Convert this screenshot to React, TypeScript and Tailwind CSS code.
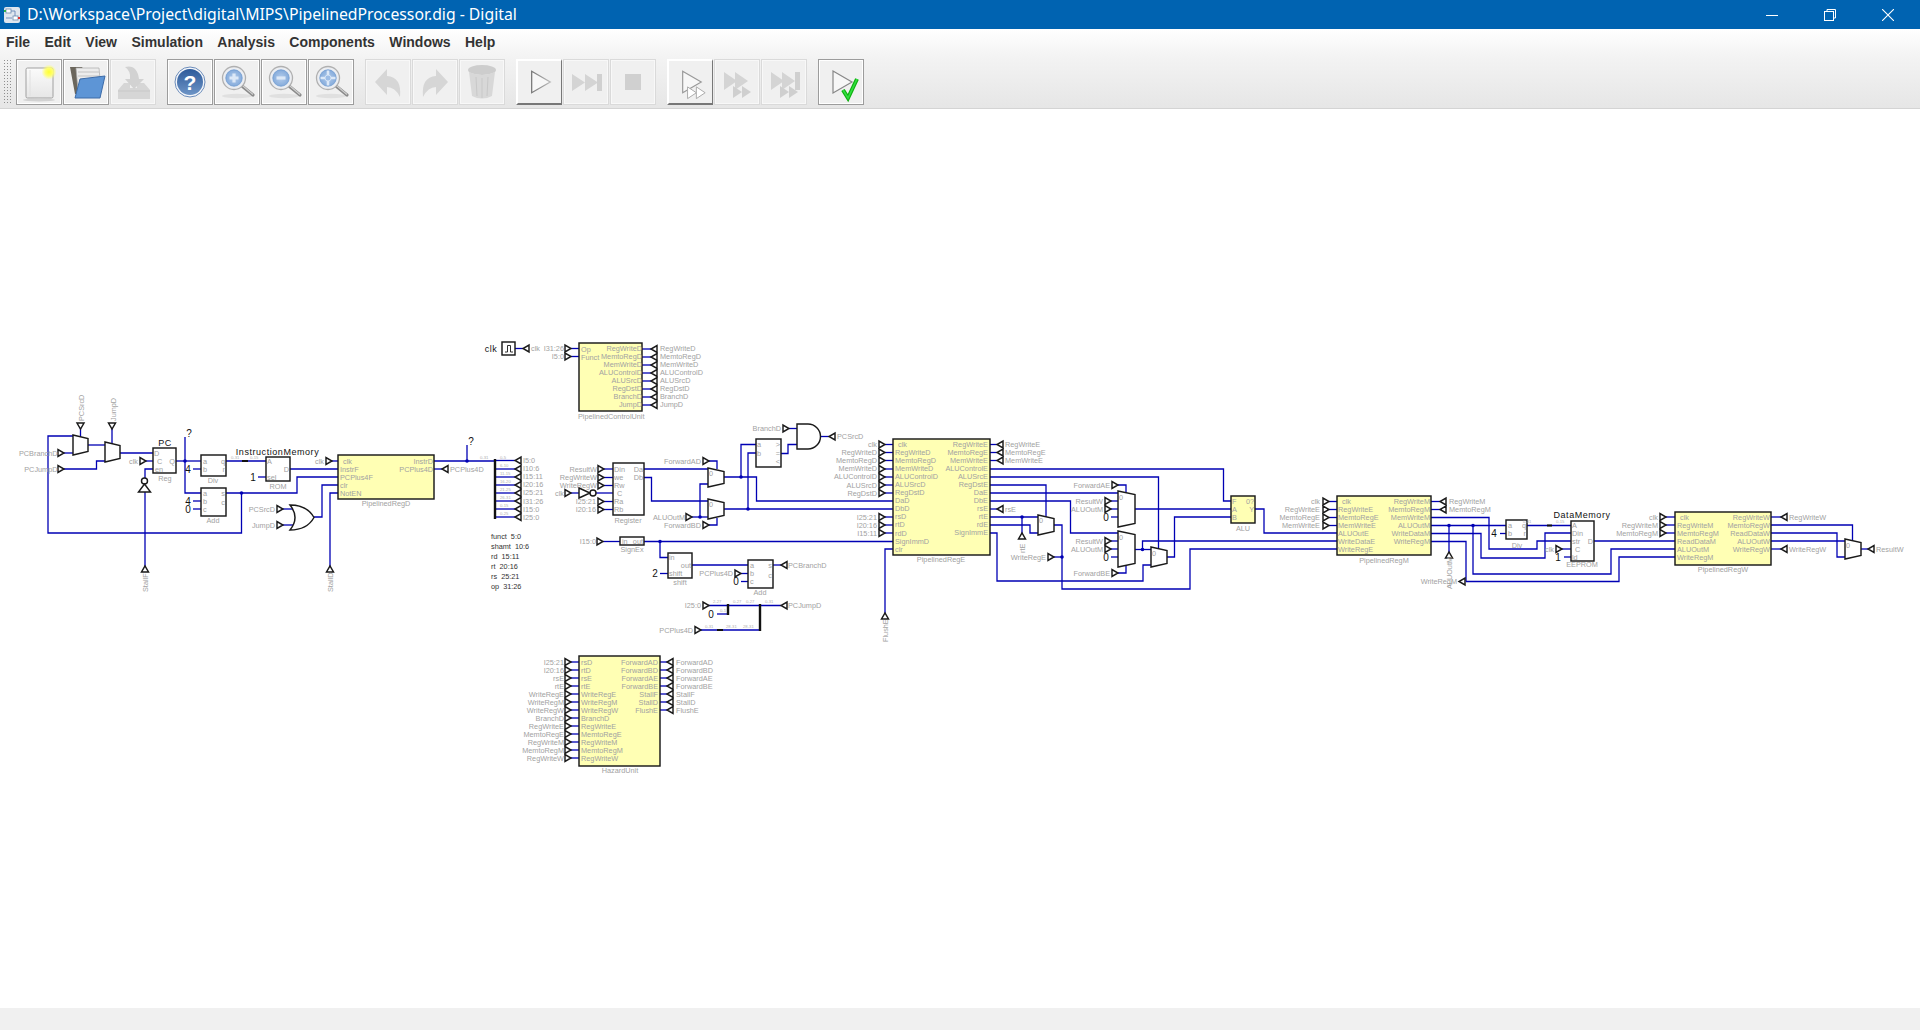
import React from "react";

type Txt = [number, number, string, ("start" | "end" | "middle")?];

const WIRES: string[] = [
  "80.5,428 80.5,438", "112,428 112,445", "73,436 48,436 48,533 241.5,533 241.5,493", "64,453 73,453",
  "64,469 96.5,469 96.5,461 105,461", "88,445 105,445", "120,453 153,453", "145,461 153,461",
  "153,469 145,469 145,478", "145,492 145,566", "176,461 201,461", "185,437 185,493 201,493",
  "193,469 201,469", "193,501 201,501", "193,509 201,509", "226,493 297,493 297,477 338,477",
  "226,461 266,461", "258,477 266,477", "290,469 338,469", "314,517 322,517 322,485 338,485",
  "282,509 294,509", "282,525 294,525", "330,566 330,493 338,493", "331,461 338,461",
  "434,461 495,461", "467,445 467,461", "434,469 442,469",
  "495,460.5 515,460.5", "495,469 515,469", "495,477 515,477", "495,485 515,485", "495,493 515,493", "495,501 515,501", "495,509 515,509", "495,517 515,517",
  "515,348.5 523,348.5", "571,348.5 579,348.5", "571,356.5 579,356.5",
  "604,469 613,469", "604,477.5 613,477.5", "604,485.5 613,485.5", "596,493 613,493", "570,493 579,493", "604,501.5 613,501.5", "604,509.5 613,509.5",
  "644,469 708,469", "644,477.5 651.5,477.5 651.5,501 708,501",
  "708,461 717,461 717,469", "708,525 717,525 717,518", "692,517 708,517", "700,517 700,484 708,484",
  "724,477 756.5,477 756.5,501 893,501", "724,509 893,509",
  "741,477 741,444.5 756,444.5", "748,509 748,453 756,453",
  "781,453.5 788,453.5 788,444.5 797,444.5", "789,428.5 797,428.5", "821,436.5 829,436.5",
  "603,541.5 620,541.5", "644,541.5 893,541.5", "660,541.5 660,557.5 668,557.5", "660,573.5 668,573.5",
  "692,565 748,565", "741,573.5 748,573.5", "741,581.5 748,581.5", "773,565 781,565",
  "708,605.5 781,605.5", "717,614 728,614", "700,630 760,630",
  "885,444.5 893,444.5", "885,452.5 893,452.5", "885,460.5 893,460.5", "885,469 893,469", "885,477 893,477", "885,485 893,485", "885,493 893,493",
  "885,517 893,517", "885,525 893,525", "885,533 893,533", "885,613 885,549 893,549",
  "990,444.5 997,444.5", "990,452.5 997,452.5", "990,460.5 997,460.5", "990,509 997,509",
  "990,469 1223.5,469 1223.5,501 1231,501", "990,477 1158.5,477 1158.5,550", "990,485 1046,485 1046,518",
  "990,493 1118,493", "990,501 1070.5,501 1070.5,533 1118,533", "990,517 1038,517", "1022,517 1022,533",
  "990,525 1030,525 1030,533 1038,533", "1054,525 1062,525 1062,589 1190,589 1190,549 1337,549",
  "1054,557 1062,557", "990,533 997,533 997,581 1143,581 1143,565 1151,565",
  "1118,485 1126,485 1126,493", "1111,501 1118,501", "1111,509 1118,509", "1111,517 1118,517",
  "1111,541 1118,541", "1111,549 1118,549", "1111,557 1118,557", "1118,573 1126,573 1126,565",
  "1135,509 1231,509", "1135,549.5 1151,549.5", "1142.5,549.5 1142.5,541 1337,541", "1167,557 1174.5,557 1174.5,517 1231,517",
  "1255,509 1264,509 1264,533 1337,533",
  "1329,501.5 1337,501.5", "1329,509.5 1337,509.5", "1329,517.5 1337,517.5", "1329,525.5 1337,525.5",
  "1431,501.5 1440,501.5", "1431,509.5 1440,509.5", "1431,517.5 1489,517.5 1489,549 1537,549 1537,541 1571,541",
  "1431,525.5 1506,525.5", "1449,525.5 1449,552", "1473,525.5 1473,574 1611,574 1611,549 1675,549",
  "1431,533.5 1481,533.5 1481,558 1545,558 1545,533 1571,533", "1431,541.5 1466,541.5 1466,581.5", "1466,581.5 1619,581.5 1619,557 1675,557",
  "1500,533.5 1506,533.5", "1527,525.5 1571,525.5", "1562,549 1571,549", "1564,557 1571,557", "1594,541 1675,541",
  "1666,517 1675,517", "1666,525 1675,525", "1666,533 1675,533",
  "1771,517 1781,517", "1771,525 1852.5,525 1852.5,541", "1771,533 1837,533 1837,557 1845,557", "1771,541 1845,541", "1771,549 1781,549", "1861,549 1868,549",
  ...[0,1,2,3,4,5,6,7].map((i) => `642,${349 + i * 8} 651,${349 + i * 8}`),
  ...[0,1,2,3,4,5,6,7,8,9,10,11,12].map((i) => `571,${662 + i * 8} 579,${662 + i * 8}`),
  ...[0,1,2,3,4,5,6].map((i) => `660,${662 + i * 8} 667,${662 + i * 8}`),
];

const DOTS = [[185,461],[241.5,493],[467,461],[700,517],[741,477],[748,509],[660,541.5],[1022,517],[1062,557],[1142.5,549.5],[1449,525.5],[1473,525.5]];

// x, y, direction
const PINS: [number, number, "r" | "l" | "u" | "d"][] = [
  [80.5,423,"d"],[112,423,"d"],[58,453,"r"],[58,469,"r"],[140,461,"r"],[145,566,"u"],[277,509,"r"],[277,525,"r"],[326,461,"r"],[330,566,"u"],[442,469,"l"],
  [515,460.5,"l"],[515,469,"l"],[515,477,"l"],[515,485,"l"],[515,493,"l"],[515,501,"l"],[515,509,"l"],[515,517,"l"],
  [523,348.5,"l"],[565,348.5,"r"],[565,356.5,"r"],
  [598,469,"r"],[598,477.5,"r"],[598,485.5,"r"],[565,493,"r"],[598,501.5,"r"],[598,509.5,"r"],
  [703,461,"r"],[703,525,"r"],[686,517,"r"],[783,428.5,"r"],[829,436.5,"l"],[597,541.5,"r"],[735,573.5,"r"],[781,565,"l"],[703,605.5,"r"],[781,605.5,"l"],[695,630,"r"],
  [885,613,"u"],[879,444.5,"r"],[879,452.5,"r"],[879,460.5,"r"],[879,469,"r"],[879,477,"r"],[879,485,"r"],[879,493,"r"],[879,517,"r"],[879,525,"r"],[879,533,"r"],
  [997,444.5,"l"],[997,452.5,"l"],[997,460.5,"l"],[997,509,"l"],[1022,533,"u"],[1048,557,"r"],
  [1112,485,"r"],[1105,501,"r"],[1105,509,"r"],[1105,541,"r"],[1105,549,"r"],[1112,573,"r"],
  [1323,501.5,"r"],[1323,509.5,"r"],[1323,517.5,"r"],[1323,525.5,"r"],[1440,501.5,"l"],[1440,509.5,"l"],[1449,552,"u"],[1459,581.5,"l"],
  [1556,549,"r"],[1660,517,"r"],[1660,525,"r"],[1660,533,"r"],[1781,517,"l"],[1781,549,"l"],[1868,549,"l"],
  ...[0,1,2,3,4,5,6,7].map((i) => [651, 349 + i * 8, "l"] as [number, number, "l"]),
  ...[0,1,2,3,4,5,6,7,8,9,10,11,12].map((i) => [565, 662 + i * 8, "r"] as [number, number, "r"]),
  ...[0,1,2,3,4,5,6].map((i) => [667, 662 + i * 8, "l"] as [number, number, "l"]),
];

// x, y, w, h, yellow?
const BOXES: [number, number, number, number, boolean?][] = [
  [153,448,23,25],[201,455,25,21],[201,488,25,28],[266,457,24,24],[338,455,96,44,true],
  [579,343,63,68,true],[613,463,31,52],[756,439,25,28],[620,537,24,8],[668,553,24,25],[748,560,25,28],
  [893,439,97,116,true],[1231,496,24,27,true],[1337,496,94,59,true],[1506,520,21,19],[1571,521,23,40],[1675,512,96,53,true],[579,656,81,110,true],
];

// x1, x2, y1, y2
const MUXES: [number, number, number, number][] = [
  [73,88,435,455],[105,120,442,462],[708,724,468,487],[708,724,499,519],[1038,1054,515,535],
  [1118,1135,491,527],[1118,1135,531,567],[1151,1167,547,567],[1845,1861,539,559],
];

const rows = (x: number, y: number, step: number, names: string[], a: "start" | "end" = "start"): Txt[] =>
  names.map((n, i) => [x, y + i * step, n, a] as Txt);

const GRAY: Txt[] = [
  [57.5,453,"PCBranchD","end"],[57.5,469,"PCJumpD","end"],[138,461,"clk","end"],[154,453,"D"],[157,461,"C"],[155,469,"en"],[175,461,"Q","end"],[165,478,"Reg","middle"],
  [203,461,"a"],[225,461,"q","end"],[203,469,"b"],[225,469,"r","end"],[213,480,"Div","middle"],
  [203,493,"a"],[225,493,"s","end"],[203,501,"b"],[225,502,"c","end"],[203,509,"c"],[213,520,"Add","middle"],
  [267,461,"A"],[289,469,"D","end"],[267,477,"sel"],[278,486,"ROM","middle"],[275,509,"PCSrcD","end"],[275,525,"JumpD","end"],[324,461,"clk","end"],
  [343,461,"clk"],...rows(340,469,8,["InstrF","PCPlus4F","clr","NotEN"]),[433,461,"InstrD","end"],[433,469,"PCPlus4D","end"],[386,503,"PipelinedRegD","middle"],
  [450,469,"PCPlus4D"],
  ...rows(523,460.5,8.1,["I5:0","I10:6","I15:11","I20:16","I25:21","I31:26","I15:0","I25:0"]),
  [531,348.5,"clk"],[564,348.5,"I31:26","end"],[564,356.5,"I5:0","end"],[581,349,"Op"],[581,357,"Funct"],
  ...rows(642,348.4,8,["RegWriteD","MemtoRegD","MemWriteD","ALUControlD","ALUSrcD","RegDstD","BranchD","JumpD"],"end"),
  ...rows(660,348.4,8,["RegWriteD","MemtoRegD","MemWriteD","ALUControlD","ALUSrcD","RegDstD","BranchD","JumpD"]),
  [578,416,"PipelinedControlUnit"],
  ...rows(597,469,8.2,["ResultW","RegWriteW","WriteRegW"],"end"),[564,493,"clk","end"],[596,501.5,"I25:21","end"],[596,509.5,"I20:16","end"],
  ...rows(614,469,8.2,["Din","we","Rw"]),[617,493.5,"C"],[614,501.5,"Ra"],[614,509.5,"Rb"],[643,469,"Da","end"],[643,477.5,"Db","end"],[628,520.5,"Register","middle"],
  [701,461,"ForwardAD","end"],[701,525,"ForwardBD","end"],[685,517,"ALUOutM","end"],[709,473,"0"],[709,504,"0"],
  [757,444.5,"a"],[757,453,"b"],[780,444,">","end"],[780,453,"=","end"],[780,461,"<","end"],
  [781,428.5,"BranchD","end"],[837,436.5,"PCSrcD"],[596,541.5,"I15:0","end"],[622,541.5,"in"],[643,541.5,"out","end"],[632,549.5,"SignEx","middle"],
  [669,557.5,"in"],[691,565,"out","end"],[669,573.5,"shift"],[680,582.5,"shift","middle"],
  [750,565,"a"],[772,565,"s","end"],[750,573.5,"b"],[772,575,"c","end"],[750,581.5,"c"],[760,592,"Add","middle"],[733,573.5,"PCPlus4D","end"],[788,565,"PCBranchD"],
  [701,605.5,"I25:0","end"],[788,605.5,"PCJumpD"],[693,630,"PCPlus4D","end"],
  ...rows(877,444.5,8.1,["clk","RegWriteD","MemtoRegD","MemWriteD","ALUControlD","ALUSrcD","RegDstD"],"end"),
  ...rows(877,517,8,["I25:21","I20:16","I15:11"],"end"),
  [898,444.5,"clk"],...rows(895,452.5,8.05,["RegWriteD","MemtoRegD","MemWriteD","ALUControlD","ALUSrcD","RegDstD","DaD","DbD","rsD","rtD","rdD","SignImmD","clr"]),
  ...rows(988,444.5,8,["RegWriteE","MemtoRegE","MemWriteE","ALUControlE","ALUSrcE","RegDstE","DaE","DbE","rsE","rtE","rdE","SignImmE"],"end"),
  [941,559,"PipelinedRegE","middle"],[1005,444.5,"RegWriteE"],[1005,452.5,"MemtoRegE"],[1005,460.5,"MemWriteE"],[1005,509,"rsE"],
  [1039,520,"0"],[1046,557,"WriteRegE","end"],[1110,485,"ForwardAE","end"],[1103,501,"ResultW","end"],[1103,509,"ALUOutM","end"],[1119,497,"0"],
  [1103,541,"ResultW","end"],[1103,549,"ALUOutM","end"],[1119,537,"0"],[1110,573,"ForwardBE","end"],[1152,553,"0"],
  [1232,501,"F"],[1232,509,"A"],[1232,517,"B"],[1254,501,"0?","end"],[1254,509,"Y","end"],[1243,528,"ALU","middle"],
  [1320,501.5,"clk","end"],...rows(1320,509.5,8,["RegWriteE","MemtoRegE","MemWriteE"],"end"),
  [1342,501.5,"clk"],...rows(1338,509.5,8,["RegWriteE","MemtoRegE","MemWriteE","ALUOutE","WriteDataE","WriteRegE"]),
  ...rows(1430,501.5,8,["RegWriteM","MemtoRegM","MemWriteM","ALUOutM","WriteDataM","WriteRegM"],"end"),[1449,501.5,"RegWriteM"],[1449,509.5,"MemtoRegM"],[1384,560,"PipelinedRegM","middle"],
  [1457,581.5,"WriteRegM","end"],
  [1508,525.5,"a"],[1526,525.5,"q","end"],[1508,533.5,"b"],[1526,533.5,"r","end"],[1517,545,"Div","middle"],
  [1572,525.5,"A"],[1572,533.5,"Din"],[1572,541,"str"],[1575,549,"C"],[1572,557,"ld"],[1593,541,"D","end"],[1582,564.5,"EEPROM","middle"],[1554,549,"clk","end"],
  [1658,517,"clk","end"],[1658,525,"RegWriteM","end"],[1658,533,"MemtoRegM","end"],[1680,517,"clk"],
  ...rows(1677,525,8,["RegWriteM","MemtoRegM","ReadDataM","ALUOutM","WriteRegM"]),
  ...rows(1770,517,8,["RegWriteW","MemtoRegW","ReadDataW","ALUOutW","WriteRegW"],"end"),[1723,569,"PipelinedRegW","middle"],[1789,517,"RegWriteW"],[1789,549,"WriteRegW"],[1846,545,"0"],[1876,549,"ResultW"],
  ...rows(564,662,8,["I25:21","I20:16","rsE","rtE","WriteRegE","WriteRegM","WriteRegW","BranchD","RegWriteE","MemtoRegE","RegWriteM","MemtoRegM","RegWriteW"],"end"),
  ...rows(581,662,8,["rsD","rtD","rsE","rtE","WriteRegE","WriteRegM","WriteRegW","BranchD","RegWriteE","MemtoRegE","RegWriteM","MemtoRegM","RegWriteW"]),
  ...rows(658,662,8,["ForwardAD","ForwardBD","ForwardAE","ForwardBE","StallF","StallD","FlushE"],"end"),
  ...rows(676,662,8,["ForwardAD","ForwardBD","ForwardAE","ForwardBE","StallF","StallD","FlushE"]),
  [620,770,"HazardUnit","middle"],
];

const TINY: Txt[] = [
  [231,458.5,"0-31"],[250,458.5,"0-15"],[480,458.5,"0-31"],[500,458.5,"0-5"],[500,466.5,"6-10"],[500,474.5,"11-15"],[500,482.5,"16-20"],[500,490.5,"21-25"],[500,498.5,"26-31"],[500,506.5,"0-15"],[500,514.5,"0-25"],
  [713,603,"2-27"],[733,603,"0-27"],[746,603,"0-27"],[765,603,"0-31"],[720,611.5,"0-1"],[705,627.5,"0-31"],[726,627.5,"28-31"],[743,627.5,"28-31"],[1523,523,"0-31"],[1556,523,"0-15"],
];

const BLACK: Txt[] = [
  [165,443,"PC","middle"],[277.5,451.5,"InstructionMemory","middle"],[1582,514.5,"DataMemory","middle"],[491,349,"clk","middle"],
];
const NUMS: Txt[] = [
  [188,469.5,"4","middle"],[188,501.5,"4","middle"],[188,509.5,"0","middle"],[253,477.5,"1","middle"],[655,573.5,"2","middle"],[736,581.5,"0","middle"],[711,614,"0","middle"],
  [1106,517,"0","middle"],[1106,557,"0","middle"],[1494,533.5,"4","middle"],[1558,557,"1","middle"],
];
const QS: Txt[] = [[189,437,"?","middle"],[471,445,"?","middle"]];
const NOTES = ["funct  5:0", "shamt  10:6", "rd  15:11", "rt  20:16", "rs  25:21", "op  31:26"];
const VERT: Txt[] = [[84,421,"PCSrcD"],[116,421,"JumpD"],[147.5,592,"StallF"],[332.5,592,"StallD"],[888,642,"FlushE"],[1025,553,"rtE"],[1451.5,589,"ALUOutM"]];

const pinPoints = (x: number, y: number, d: string) => {
  if (d === "r") return `${x},${y - 3.5} ${x},${y + 3.5} ${x + 6},${y}`;
  if (d === "l") return `${x + 6},${y - 3.5} ${x + 6},${y + 3.5} ${x},${y}`;
  if (d === "u") return `${x - 3.5},${y + 6} ${x + 3.5},${y + 6} ${x},${y}`;
  return `${x - 3.5},${y} ${x + 3.5},${y} ${x},${y + 6}`;
};

function Circuit() {
  return (
    <svg width="1920" height="899" viewBox="0 109 1920 899" className="block font-['Liberation_Sans',sans-serif]">
      <g fill="none" stroke="#0000b4" strokeWidth="1.3">
        {WIRES.map((w, i) => <polyline key={i} points={w} />)}
      </g>
      <g fill="#0000b4">
        {DOTS.map(([x, y], i) => <circle key={i} cx={x} cy={y} r="1.8" />)}
      </g>
      <g stroke="#1a1a1a" strokeWidth="1.45" fill="#fff">
        {BOXES.map(([x, y, w, h, yel], i) => <rect key={i} x={x} y={y} width={w} height={h} fill={yel ? "#ffffb4" : "#fff"} />)}
        {MUXES.map(([a, b, c, d], i) => <polygon key={i} points={`${a},${c} ${b},${c + 3.5} ${b},${d - 3.5} ${a},${d}`} />)}
        <path d="M290,505 Q300,517.5 290,530 Q307,530 314,517.5 Q307,505 290,505Z" />
        <path d="M797,424 H808 A12.5,12.5 0 0 1 808,449 H797Z" />
        <polygon points="579,488 579,498 590,493" />
        <circle cx="593" cy="493" r="3" />
        <circle cx="144.5" cy="481" r="3" />
        <polygon points="138.5,492 150.5,492 144.5,484" />
        <rect x="502" y="342" width="13" height="13" />
        <path d="M505,352 H507.5 V345.5 H510.5 V352 H513" fill="none" strokeWidth="0.9" />
        {PINS.map(([x, y, d], i) => <polygon key={i} points={pinPoints(x, y, d)} />)}
      </g>
      <g stroke="#111" fill="none">
        <line x1="495" y1="459" x2="495" y2="519" strokeWidth="2.4" />
        <line x1="728" y1="604" x2="728" y2="615" strokeWidth="2.4" />
        <line x1="760" y1="604" x2="760" y2="631" strokeWidth="2.4" />
        <line x1="242" y1="461" x2="248" y2="461" strokeWidth="2" />
        <line x1="717" y1="630" x2="723" y2="630" strokeWidth="2" />
        <line x1="1547" y1="525.5" x2="1552" y2="525.5" strokeWidth="2" />
      </g>
      <g fontSize="7.3" fill="#a2a2a2">
        {GRAY.map(([x, y, t, a], i) => <text key={i} x={x} y={y + 2.5} textAnchor={a ?? "start"}>{t}</text>)}
        {VERT.map(([x, y, t], i) => <text key={i} x={x} y={y} transform={`rotate(-90 ${x} ${y})`}>{t}</text>)}
      </g>
      <g fontSize="4.2" fill="#b0b0b0">
        {TINY.map(([x, y, t], i) => <text key={i} x={x} y={y}>{t}</text>)}
      </g>
      <g fontSize="9" fill="#111" letterSpacing="0.55">
        {BLACK.map(([x, y, t, a], i) => <text key={i} x={x} y={y + 3} textAnchor={a}>{t}</text>)}
      </g>
      <g fontSize="10" fill="#111">
        {NUMS.map(([x, y, t, a], i) => <text key={i} x={x} y={y + 3.6} textAnchor={a}>{t}</text>)}
        {QS.map(([x, y, t, a], i) => <text key={i} x={x} y={y} textAnchor={a}>{t}</text>)}
      </g>
      <g fontSize="7.3" fill="#333">
        {NOTES.map((t, i) => <text key={i} x="491" y={538.5 + i * 10} xmlSpace="preserve">{t}</text>)}
      </g>
    </svg>
  );
}

const I = ({ children }: { children: React.ReactNode }) => (
  <svg width="44" height="44" viewBox="0 0 44 44">{children}</svg>
);

const NewIcon = () => (
  <I>
    <defs>
      <linearGradient id="pg" x1="0" y1="0" x2="0" y2="1"><stop offset="0" stopColor="#fbfbfb" /><stop offset="1" stopColor="#e6e6e6" /></linearGradient>
      <radialGradient id="gl"><stop offset="0" stopColor="#ffff30" /><stop offset="0.5" stopColor="#ffff70" /><stop offset="1" stopColor="#ffff70" stopOpacity="0" /></radialGradient>
    </defs>
    <rect x="9" y="8" width="27" height="30" rx="1.5" fill="url(#pg)" stroke="#a0a0a0" />
    <line x1="13" y1="10" x2="13" y2="36" stroke="#e0e0e0" />
    <ellipse cx="22" cy="40" rx="16" ry="1.4" fill="#d2d2d2" />
    <circle cx="32" cy="12" r="7.5" fill="url(#gl)" />
  </I>
);
const OpenIcon = () => (
  <I>
    <path d="M6,7 H18 L20,10 H24 V34 H11Z" fill="#6b665c" />
    <path d="M12,8 H35 L37,30 H14Z" fill="#ececec" stroke="#ababab" strokeWidth="0.7" />
    <path d="M14,12 H35 M14,16 H36" stroke="#c2c2c2" />
    <path d="M16,19 L41,16 L36,38 H11Z" fill="#5d95d6" stroke="#3c6ba8" />
  </I>
);
const SaveIcon = () => (
  <I>
    <path d="M7,30 L13,23 H19 V28 H26 V23 H33 L39,30 V39 H7Z" fill="#d6d6d6" />
    <path d="M7,31 H39" stroke="#c8c8c8" />
    <path d="M14,7 Q26,4 28,19 H33 L23,29 L14,19 H19 Q20,11 14,7Z" fill="#d2d2d2" />
  </I>
);
const HelpIcon = () => (
  <I>
    <defs>
      <linearGradient id="hb" x1="0" y1="0" x2="0" y2="1"><stop offset="0" stopColor="#2d5a9a" /><stop offset="1" stopColor="#6d94c6" /></linearGradient>
    </defs>
    <circle cx="22" cy="22" r="15" fill="#f4f6fa" stroke="#6b8cba" />
    <circle cx="22" cy="22" r="13" fill="url(#hb)" />
    <text x="22" y="29.5" textAnchor="middle" fontSize="21" fontWeight="700" fill="#fff" fontFamily="Liberation Sans">?</text>
  </I>
);
const Mag = ({ mode, id }: { mode: "plus" | "minus" | "fit"; id: string }) => (
  <I>
    <defs>
      <radialGradient id={id}><stop offset="0" stopColor="#b4cdec" /><stop offset="1" stopColor="#85abdb" /></radialGradient>
    </defs>
    <ellipse cx="22" cy="36" rx="15" ry="2.2" fill="#e0e0e0" />
    <line x1="27" y1="26" x2="38" y2="35" stroke="#8a8a8a" strokeWidth="3.2" strokeLinecap="round" />
    <line x1="28" y1="26" x2="38" y2="34.5" stroke="#d0d0d0" strokeWidth="1.1" />
    <circle cx="19" cy="18" r="11.5" fill="#eceef2" stroke="#b0b0b0" strokeWidth="1.3" />
    <circle cx="19" cy="18" r="8.2" fill={`url(#${id})`} stroke="#6f9ad0" strokeWidth="0.8" />
    {mode === "plus" && <path d="M19,13.5 V22.5 M14.5,18 H23.5" stroke="#dce8f7" strokeWidth="3.2" />}
    {mode === "minus" && <path d="M14.5,18 H23.5" stroke="#dce8f7" strokeWidth="3.2" />}
    {mode === "fit" && <path d="M19,10.5 V25.5 M11.5,18 H26.5" stroke="#dce8f7" strokeWidth="2.6" />}
    {mode === "fit" && <circle cx="19" cy="18" r="3" fill="#9dbde6" stroke="#dce8f7" strokeWidth="0.8" />}
  </I>
);
const UndoIcon = ({ flip }: { flip?: boolean }) => (
  <I>
    <path
      d="M9,22 L21,9 V16 Q36,17 34,37 Q29,27 21,27 V35Z"
      fill="#d6d6d6"
      transform={flip ? "translate(44,0) scale(-1,1)" : undefined}
    />
  </I>
);
const TrashIcon = () => (
  <I>
    <ellipse cx="22" cy="10" rx="14" ry="5" fill="#cdcdcd" />
    <path d="M9,12 Q22,18 35,12 L32,36 Q22,41 12,36Z" fill="#d8d8d8" />
    <path d="M16,17 L17,36 M22,18 V38 M28,17 L27,36" stroke="#c8c8c8" />
  </I>
);
const PlayIcon = () => (
  <I>
    <defs><linearGradient id="pl" x1="0" y1="0" x2="1" y2="0"><stop offset="0" stopColor="#777" /><stop offset="1" stopColor="#bbb" /></linearGradient></defs>
    <polygon points="14,11 33,22 14,33" fill="#f7f7f7" stroke="url(#pl)" strokeWidth="1.3" />
  </I>
);
const FFIcon = () => (
  <I>
    <polygon points="8,14 21,22.5 8,31" fill="#d4d4d4" />
    <polygon points="21,14 34,22.5 21,31" fill="#d4d4d4" />
    <rect x="33" y="14" width="5" height="17" fill="#d0d0d0" />
  </I>
);
const StopIcon = () => (
  <I><rect x="14" y="14" width="16" height="16" fill="#d0d0d0" /></I>
);
const MicroIcon = () => (
  <I>
    <polygon points="14,11 33,22 14,33" fill="#f7f7f7" stroke="#999" strokeWidth="1.2" />
    <polygon points="19,27 28,33 19,39" fill="#fff" stroke="#aaa" />
    <polygon points="28,27 37,33 28,39" fill="#fff" stroke="#aaa" />
  </I>
);
const FFMicro = ({ bar }: { bar?: boolean }) => (
  <I>
    <polygon points="9,12 22,21 9,30" fill="#d4d4d4" />
    <polygon points="20,12 33,21 20,30" fill="#d4d4d4" />
    {bar && <rect x="33" y="12" width="5" height="18" fill="#d0d0d0" />}
    <polygon points="18,26 27,32 18,38" fill="#cfcfcf" />
    <polygon points="27,26 36,32 27,38" fill="#cfcfcf" />
  </I>
);
const CheckIcon = () => (
  <I>
    <polygon points="14,11 33,22 14,33" fill="#f7f7f7" stroke="#888" strokeWidth="1.2" />
    <path d="M24,30 L29,38 L38,19" fill="none" stroke="#10b010" strokeWidth="4" strokeLinejoin="miter" />
    <path d="M24,30 L29,38 L38,19" fill="none" stroke="#30e040" strokeWidth="1.6" />
  </I>
);

const Btn = ({ v = "on", children }: { v?: "on" | "off" | "raised"; children: React.ReactNode }) => {
  const c =
    v === "on"
      ? "border border-[#9c9c9c] shadow-[inset_0_0_0_1px_#fff]"
      : v === "off"
        ? "border border-[#dadada] shadow-[inset_0_0_0_1px_#f8f8f8]"
        : "border-t-2 border-l-2 border-r border-b-2 border-t-white border-l-white border-r-[#777] border-b-[#777]";
  return (
    <div className={`w-[46px] h-[46px] flex items-center justify-center bg-[#f0f0f0] ${c}`}>{children}</div>
  );
};

const Menu = ["File", "Edit", "View", "Simulation", "Analysis", "Components", "Windows", "Help"];

export default function App() {
  return (
    <div className="w-[1920px] h-[1030px] flex flex-col bg-white overflow-hidden font-['Liberation_Sans',sans-serif]">
      <div className="h-[29px] bg-[#0063b1] flex items-center text-white shrink-0">
        <svg width="16" height="16" viewBox="0 0 16 16" className="ml-[4px] mr-[7px]">
          <rect x="0" y="0" width="16" height="16" rx="2" fill="#dfe6ee" />
          <rect x="2" y="2" width="5" height="4" fill="#fff" stroke="#6b8cae" strokeWidth="0.8" />
          <rect x="9" y="9" width="5" height="4" fill="#fff" stroke="#6b8cae" strokeWidth="0.8" />
          <path d="M7,4 H11 V9 M2,11 H8" stroke="#5a7fb0" strokeWidth="0.8" fill="none" />
          <rect x="0" y="3" width="2" height="2" fill="#2fb44a" />
          <rect x="14" y="10" width="2" height="2" fill="#e03030" />
        </svg>
        <span className="text-[15.78px] font-['Noto_Sans',sans-serif] whitespace-nowrap">D:\Workspace\Project\digital\MIPS\PipelinedProcessor.dig - Digital</span>
        <div className="ml-auto flex pr-[3px]">
          <div className="w-[58px] flex justify-center"><svg width="12" height="12" viewBox="0 0 12 12"><line x1="0" y1="6.5" x2="12" y2="6.5" stroke="#fff" /></svg></div>
          <div className="w-[58px] flex justify-center"><svg width="12" height="12" viewBox="0 0 12 12"><rect x="0.5" y="2.5" width="9" height="9" fill="none" stroke="#fff" /><path d="M3,2.5 V0.5 H11.5 V9 H9.5" fill="none" stroke="#fff" /></svg></div>
          <div className="w-[58px] flex justify-center"><svg width="12" height="12" viewBox="0 0 12 12"><path d="M0,0 L12,12 M12,0 L0,12" stroke="#fff" strokeWidth="1.1" /></svg></div>
        </div>
      </div>
      <div className="h-[28px] bg-linear-to-b from-white to-[#f3f3f3] flex items-center gap-[14.4px] pl-[6px] pb-[2px] text-[14px] font-bold text-[#333] shrink-0">
        {Menu.map((m) => <span key={m}>{m}</span>)}
      </div>
      <div className="h-[52px] bg-linear-to-b from-[#f3f3f3] to-[#e6e6e6] border-b border-[#d4d4d4] flex items-start pt-[2px] shrink-0">
        <div className="w-[9px] h-[46px] ml-[3px] mr-[4px] bg-[radial-gradient(#8f8f8f_0.7px,transparent_0.8px)] bg-size-[3px_3px]" />
        <div className="flex gap-px"><Btn><NewIcon /></Btn><Btn><OpenIcon /></Btn><Btn v="off"><SaveIcon /></Btn></div>
        <div className="flex gap-px ml-[11px]"><Btn><HelpIcon /></Btn><Btn><Mag mode="plus" id="m1" /></Btn><Btn><Mag mode="minus" id="m2" /></Btn><Btn><Mag mode="fit" id="m3" /></Btn></div>
        <div className="flex gap-px ml-[11px]"><Btn v="off"><UndoIcon /></Btn><Btn v="off"><UndoIcon flip /></Btn><Btn v="off"><TrashIcon /></Btn></div>
        <div className="flex gap-px ml-[11px]"><Btn v="raised"><PlayIcon /></Btn><Btn v="off"><FFIcon /></Btn><Btn v="off"><StopIcon /></Btn></div>
        <div className="flex gap-px ml-[11px]"><Btn v="raised"><MicroIcon /></Btn><Btn v="off"><FFMicro /></Btn><Btn v="off"><FFMicro bar /></Btn></div>
        <div className="ml-[11px]"><Btn><CheckIcon /></Btn></div>
      </div>
      <div className="flex-1 min-h-0"><Circuit /></div>
      <div className="h-[22px] bg-[#f0f0f0] shrink-0" />
    </div>
  );
}
